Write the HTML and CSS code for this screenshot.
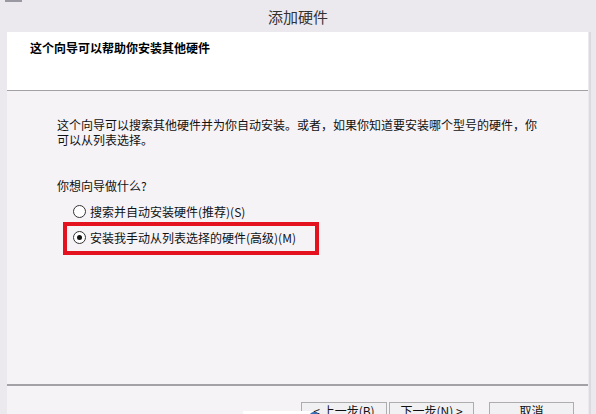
FILE: index.html
```html
<!DOCTYPE html>
<html lang="zh-CN">
<head>
<meta charset="utf-8">
<title>添加硬件</title>
<link rel="stylesheet" href="styles.css">
</head>
<body>
<div class="window">
  <div class="topstrip"></div>
  <div class="titlebar">添加硬件</div>
  <div class="frame">
    <div class="content">
      <div class="header">这个向导可以帮助你安装其他硬件</div>
      <div class="body">
        <p class="intro">这个向导可以搜索其他硬件并为你自动安装。或者，如果你知道要安装哪个型号的硬件，你<br>可以从列表选择。</p>
        <p class="question">你想向导做什么?</p>
        <div class="options">
          <label class="option"><span class="radio"></span>搜索并自动安装硬件(推荐)(S)</label>
          <div class="highlight">
            <label class="option"><span class="radio checked"></span>安装我手动从列表选择的硬件(高级)(M)</label>
          </div>
        </div>
      </div>
      <div class="footer">
        <div class="buttons">
          <button class="btn back">&lt; 上一步(B)</button>
          <button class="btn">下一步(N) &gt;</button>
          <button class="btn cancel">取消</button>
        </div>
      </div>
    </div>
    <div class="rightframe"></div>
  </div>
  <div class="overlay"><span class="blue"></span></div>
</div>
</body>
</html>
```

FILE: styles.css
```css
html, body {
  margin: 0;
  padding: 0;
}
body {
  width: 596px;
  height: 414px;
  overflow: hidden;
  background: #ebe8ee;
  font-family: "Noto Sans CJK SC", "Microsoft YaHei", sans-serif;
  color: #1a1a1a;
}
.window {
  position: relative;
  width: 596px;
  height: 414px;
  display: flex;
  flex-direction: column;
}
.topstrip {
  position: absolute;
  left: 5px;
  top: 0;
  width: 17px;
  height: 2px;
  background: #9a98a0;
}
.titlebar {
  height: 32px;
  line-height: 34px;
  text-align: center;
  font-size: 15px;
  color: #333;
  flex: none;
}
.frame {
  flex: 1;
  display: flex;
  padding-left: 7px;
}
.content {
  width: 581px;
  background: #f6f3f7;
  display: flex;
  flex-direction: column;
}
.rightframe {
  width: 2px;
  margin-left: 1px;
  background: #dcd9df;
}
.header {
  background: #fff;
  border-bottom: 1px solid #a3a1a6;
  padding: 7px 0 0 23px;
  box-sizing: border-box;
  height: 59px;
  font-size: 12px;
  font-weight: bold;
  color: #000;
}
.body {
  padding: 26px 0 0 50px;
  height: 295px;
  box-sizing: border-box;
  border-bottom: 2px solid #a3a1a6;
  font-size: 12px;
  color: #111;
}
.intro {
  margin: 0;
  line-height: 15px;
}
.question {
  margin: 31px 0 0;
  line-height: 15px;
}
.options {
  margin: 9px 0 0 16px;
  display: flex;
  flex-direction: column;
}
.option {
  display: flex;
  align-items: center;
  height: 18px;
  gap: 4px;
}
.highlight {
  margin: 2px 0 0 -10px;
  width: 242px;
  height: 23px;
  border: 4px solid #e3121e;
  padding: 0 0 2px 6px;
  display: flex;
  align-items: center;
}
.radio {
  width: 11px;
  height: 11px;
  border: 1px solid #333;
  border-radius: 50%;
  background: #fff;
  position: relative;
  flex: none;
}
.radio.checked::after {
  content: "";
  position: absolute;
  left: 3px;
  top: 3px;
  width: 5px;
  height: 5px;
  border-radius: 50%;
  background: #111;
}
.footer {
  flex: 1;
  padding: 16px 0 0 294px;
}
.buttons {
  display: flex;
  align-items: flex-start;
}
.btn {
  height: 22px;
  width: 85px;
  border: 1px solid #adadad;
  background: #f1f0f2;
  font-family: inherit;
  font-size: 12px;
  line-height: 16px;
  color: #111;
  padding: 0 0 4px;
  margin-right: 2px;
}
.btn.back {
  width: 86px;
}
.btn.cancel {
  margin-left: 13px;
}
.overlay {
  position: absolute;
  left: 243px;
  top: 411px;
  width: 70px;
  height: 3px;
  background: #fff;
}
.blue {
  position: absolute;
  left: 66px;
  top: 1px;
  width: 10px;
  height: 10px;
  border-radius: 50%;
  background: #3a6fb5;
}
```
